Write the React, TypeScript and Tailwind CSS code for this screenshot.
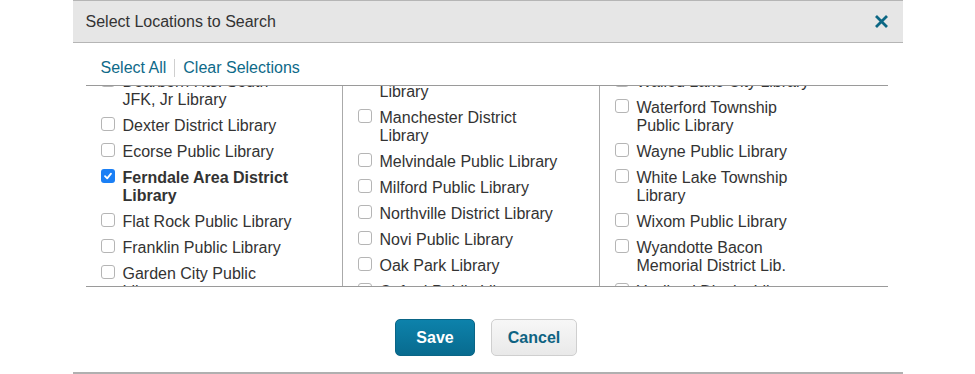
import React from "react";

type Item = { label: string; checked?: boolean };

const col1: Item[] = [
  { label: "Dearborn Hts. South JFK, Jr Library" },
  { label: "Dexter District Library" },
  { label: "Ecorse Public Library" },
  { label: "Ferndale Area District Library", checked: true },
  { label: "Flat Rock Public Library" },
  { label: "Franklin Public Library" },
  { label: "Garden City Public Library" },
  { label: "Grosse Pointe Public Library" },
];

const col2: Item[] = [
  { label: "Madison Heights Public Library" },
  { label: "Manchester District Library" },
  { label: "Melvindale Public Library" },
  { label: "Milford Public Library" },
  { label: "Northville District Library" },
  { label: "Novi Public Library" },
  { label: "Oak Park Library" },
  { label: "Oxford Public Library" },
];

const col3: Item[] = [
  { label: "Walled Lake City Library" },
  { label: "Waterford Township Public Library" },
  { label: "Wayne Public Library" },
  { label: "White Lake Township Library" },
  { label: "Wixom Public Library" },
  { label: "Wyandotte Bacon Memorial District Lib." },
  { label: "Ypsilanti District Library" },
];

function Check({ checked }: { checked?: boolean }) {
  if (checked) {
    return (
      <div className="flex h-[14px] w-[14px] shrink-0 items-center justify-center rounded-[3px] bg-[#1a7ff5]">
        <svg width="10" height="10" viewBox="0 0 10 10">
          <path d="M2 5.2 L4.2 7.4 L8 2.6" fill="none" stroke="#fff" strokeWidth="1.8" strokeLinecap="round" strokeLinejoin="round" />
        </svg>
      </div>
    );
  }
  return <div className="h-[14px] w-[14px] shrink-0 rounded-[3px] border border-[#b5b5b5] bg-white" />;
}

function Column({ items, offset, className }: { items: Item[]; offset: string; className: string }) {
  return (
    <div className={`h-[200px] overflow-hidden ${className}`}>
      <ul className={offset}>
        {items.map((it) => (
          <li key={it.label} className="flex items-start gap-[8px] py-[4px] pl-[15px]">
            <Check checked={it.checked} />
            <span className={`w-[180px] text-[16px] leading-[18px] ${it.checked ? "font-bold text-[#333]" : "text-[#333]"}`}>
              {it.label}
            </span>
          </li>
        ))}
      </ul>
    </div>
  );
}

export default function App() {
  return (
    <div className="min-h-[374px] bg-white" style={{ fontFamily: '"Liberation Sans", Arial, sans-serif' }}>
      <div className="mx-auto w-[830px]">
        <div className="flex h-[43px] items-center justify-between border-y border-[#b5b5b5] bg-[#e6e6e6] pl-[13px] pr-[14px]">
          <span className="text-[16px] text-[#333]">Select Locations to Search</span>
          <svg width="15" height="15" viewBox="0 0 15 15">
            <path d="M2 2 L13 13 M13 2 L2 13" stroke="#0c6784" strokeWidth="2.8" strokeLinecap="butt" />
          </svg>
        </div>
        <div className="flex items-center pb-[8px] pl-[28px] pt-[16px] text-[16px] leading-[18px] text-[#0e6a89]">
          <span>Select All</span>
          <span className="mx-[8px] h-[18px] w-px bg-[#cfcfcf]" />
          <span>Clear Selections</span>
        </div>
        <div className="ml-[13px] mr-[15px] flex border-y border-[#9a9a9a]">
          <Column items={col1} offset="-mt-[17px]" className="w-[257px] border-r border-[#aaa]" />
          <Column items={col2} offset="-mt-[25px]" className="w-[257px] border-r border-[#aaa]" />
          <Column items={col3} offset="-mt-[17px]" className="flex-1" />
        </div>
        <div className="flex justify-center gap-[16px] pb-[16px] pr-[3px] pt-[32px]">
          <button className="h-[37px] w-[80px] rounded-[5px] border border-[#0a6586] bg-gradient-to-b from-[#0d82ab] to-[#086b8f] text-[16px] font-bold text-white">
            Save
          </button>
          <button className="h-[37px] w-[86px] rounded-[5px] border border-[#cfcfcf] bg-gradient-to-b from-[#f7f7f7] to-[#e9e9e9] text-[16px] font-bold text-[#0e6382]">
            Cancel
          </button>
        </div>
        <div className="border-b-2 border-[#b0b0b0]" />
      </div>
    </div>
  );
}
